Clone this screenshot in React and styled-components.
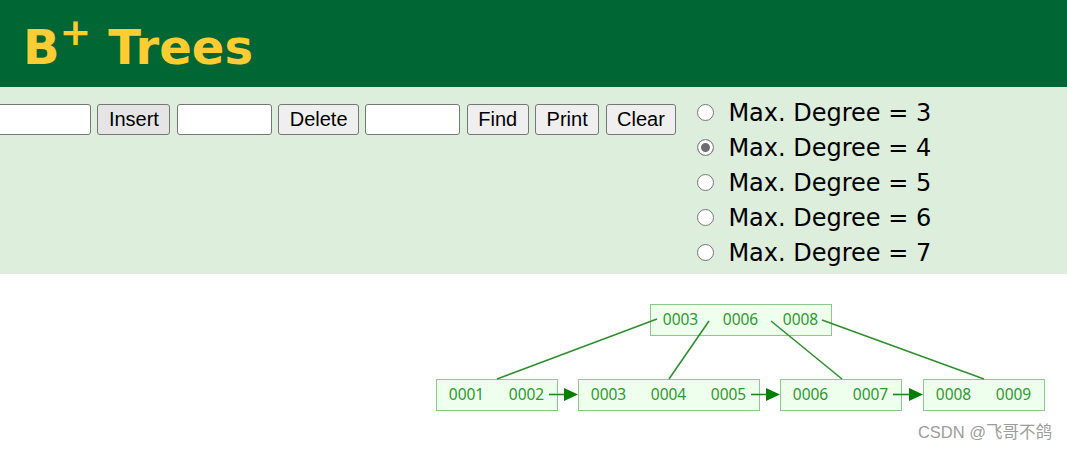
import React from 'react'
import styled, { createGlobalStyle } from 'styled-components'

const Global = createGlobalStyle`
  html, body {
    margin: 0;
    padding: 0;
    background: #ffffff;
    overflow: hidden;
  }
`

const SLOT = 60

const nodes = [
  { x: 650, y: 304, keys: ['0003', '0006', '0008'] },
  { x: 436, y: 379, keys: ['0001', '0002'] },
  { x: 578, y: 379, keys: ['0003', '0004', '0005'] },
  { x: 780, y: 379, keys: ['0006', '0007'] },
  { x: 923, y: 379, keys: ['0008', '0009'] },
]

const edges = [
  [657, 319, 497, 379],
  [709, 321, 669, 379],
  [771, 321, 842, 379],
  [822, 320, 984, 379],
]

const links = [
  [549, 578],
  [751, 780],
  [893, 923],
]

const degrees = [3, 4, 5, 6, 7]

const App = () => {
  return (
    <>
      <Global />
      <Page>
        <Header>
          <Title>
            B<Sup>+</Sup> Trees
          </Title>
        </Header>
        <Panel>
          <Controls>
            <Field type="text" />
            <Button $active>Insert</Button>
            <Field type="text" />
            <Button>Delete</Button>
            <Field type="text" />
            <Button>Find</Button>
            <Button>Print</Button>
            <Button>Clear</Button>
          </Controls>
          <Degrees>
            {degrees.map((d) => (
              <Option key={d}>
                <Radio type="radio" name="degree" defaultChecked={d === 4} />
                Max. Degree = {d}
              </Option>
            ))}
          </Degrees>
        </Panel>
        <Canvas>
          <svg width="1067" height="175" viewBox="0 274 1067 175">
            {nodes.map((n, i) => (
              <g key={i}>
                <rect
                  x={n.x + 0.5}
                  y={n.y + 0.5}
                  width={n.keys.length * SLOT + 1}
                  height={31}
                  fill="#eeffee"
                  stroke="#88cc88"
                  strokeWidth="1"
                />
                {n.keys.map((k, j) => (
                  <KeyText
                    key={j}
                    x={n.x + 30.5 + j * SLOT}
                    y={n.y + 14.5}
                    textAnchor="middle"
                    dominantBaseline="central"
                  >
                    {k}
                  </KeyText>
                ))}
              </g>
            ))}
            {edges.map(([x1, y1, x2, y2], i) => (
              <line key={i} x1={x1} y1={y1} x2={x2} y2={y2} stroke="#2f8f2f" strokeWidth="1.6" />
            ))}
            {links.map(([a, b], i) => (
              <g key={i}>
                <line x1={a} y1={394.5} x2={b - 12} y2={394.5} stroke="#1f861f" strokeWidth="1.6" />
                <polygon points={`${b - 14},388 ${b},394.5 ${b - 14},401`} fill="#007f00" />
              </g>
            ))}
          </svg>
          <Watermark>CSDN @飞哥不鸽</Watermark>
        </Canvas>
      </Page>
    </>
  )
}

export default App

const Page = styled.div`
  width: 1067px;
  height: 449px;
  display: flex;
  flex-direction: column;
  overflow: hidden;
`
const Header = styled.div`
  height: 87px;
  background: #006633;
  display: flex;
  align-items: center;
  padding-left: 23px;
  box-sizing: border-box;
`
const Title = styled.h1`
  margin: 0;
  padding-top: 6px;
  color: #ffcc33;
  font-family: 'DejaVu Sans', Verdana, sans-serif;
  font-weight: bold;
  font-size: 48px;
  line-height: 56px;
  white-space: nowrap;
`
const Sup = styled.sup`
  font-size: 38px;
  vertical-align: 19px;
  line-height: 0;
  margin-left: 0;
  margin-right: 0;
`
const Panel = styled.div`
  height: 187px;
  background: #ddeedd;
  display: flex;
  align-items: flex-start;
  box-sizing: border-box;
`
const Controls = styled.div`
  display: flex;
  align-items: center;
  gap: 6.4px;
  margin-top: 17px;
  margin-left: -4px;
`
const Field = styled.input`
  width: 95px;
  height: 31px;
  box-sizing: border-box;
  border: 1px solid #767676;
  border-radius: 3px;
  background: #ffffff;
  padding: 0 4px;
  font-family: 'Liberation Sans', Arial, sans-serif;
  font-size: 18px;
`
const Button = styled.button`
  height: 31px;
  box-sizing: border-box;
  padding: 0 10.5px;
  border: 1px solid #767676;
  border-radius: 3px;
  background: ${(p) => (p.$active ? '#e5e5e5' : '#efefef')};
  color: #000000;
  font-family: 'Liberation Sans', Arial, sans-serif;
  font-size: 20px;
  line-height: 29px;
`
const Degrees = styled.div`
  display: flex;
  flex-direction: column;
  margin-left: 20px;
  padding-top: 8px;
`
const Option = styled.label`
  display: flex;
  align-items: center;
  height: 35px;
  font-family: 'DejaVu Sans', Verdana, sans-serif;
  font-size: 24px;
  color: #000000;
  white-space: nowrap;
`
const Radio = styled.input`
  appearance: none;
  width: 17px;
  height: 17px;
  margin: 0 14px 0 1px;
  box-sizing: border-box;
  border: 1px solid #767676;
  border-radius: 50%;
  background: #ffffff;
  &:checked {
    border-color: #8a8a8a;
    background: #6d6d6d;
    box-shadow: inset 0 0 0 3px #ffffff;
  }
`
const Canvas = styled.div`
  position: relative;
  flex: 1;
  background: #ffffff;
  svg {
    display: block;
  }
`
const KeyText = styled.text`
  font-family: 'Noto Sans', 'Open Sans', sans-serif;
  font-size: 15.5px;
  fill: #2e982e;
`
const Watermark = styled.div`
  position: absolute;
  right: 15px;
  bottom: 6px;
  font-family: 'Liberation Sans', 'Noto Sans CJK SC', sans-serif;
  font-size: 16.5px;
  color: #9c9c9c;
  white-space: nowrap;
`
